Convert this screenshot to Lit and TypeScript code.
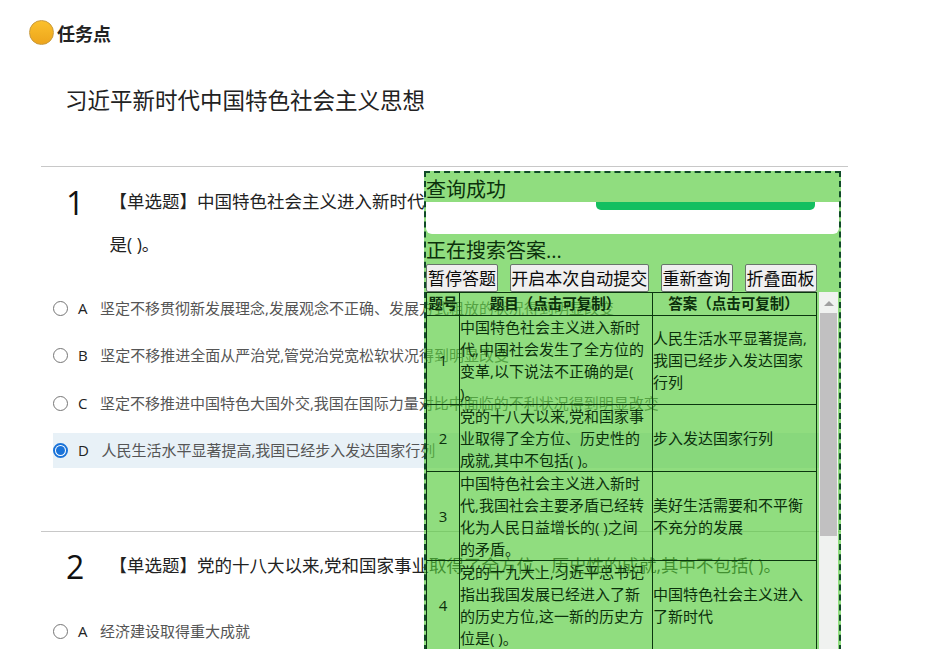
import { LitElement, html, css } from "lit";
import { customElement } from "lit/decorators.js";

interface Option { key: string; text: string; checked?: boolean; }
interface Question { no: number; text: string; options: Option[]; }

const questions: Question[] = [
  {
    no: 1,
    text: "【单选题】中国特色社会主义进入新时代\n是( )。",
    options: [
      { key: "A", text: "坚定不移贯彻新发展理念,发展观念不正确、发展方式粗放的状况得到明显改变" },
      { key: "B", text: "坚定不移推进全面从严治党,管党治党宽松软状况得到明显改变" },
      { key: "C", text: "坚定不移推进中国特色大国外交,我国在国际力量对比中面临的不利状况得到明显改变" },
      { key: "D", text: "人民生活水平显著提高,我国已经步入发达国家行列", checked: true },
    ],
  },
  {
    no: 2,
    text: "【单选题】党的十八大以来,党和国家事业取得了全方位、历史性的成就,其中不包括( )。",
    options: [{ key: "A", text: "经济建设取得重大成就" }],
  },
];

const answers = [
  ["中国特色社会主义进入新时\n代,中国社会发生了全方位的\n变革,以下说法不正确的是(\n)。", "人民生活水平显著提高,\n我国已经步入发达国家\n行列"],
  ["党的十八大以来,党和国家事\n业取得了全方位、历史性的\n成就,其中不包括( )。", "步入发达国家行列"],
  ["中国特色社会主义进入新时\n代,我国社会主要矛盾已经转\n化为人民日益增长的( )之间\n的矛盾。", "美好生活需要和不平衡\n不充分的发展"],
  ["党的十九大上,习近平总书记\n指出我国发展已经进入了新\n的历史方位,这一新的历史方\n位是( )。", "中国特色社会主义进入\n了新时代"],
];

@customElement("quiz-question")
class QuizQuestion extends LitElement {
  static properties = { question: { attribute: false } };
  declare question: Question;
  static styles = css`
    :host { display: block; }
    .head { display: flex; padding: 13px 0 0 25px; line-height: 43px; }
    .no { width: 43.5px; font-size: 32px; line-height: 46px; height: 43px; color: #111; }
    .text { font-size: 17.5px; white-space: pre; color: #222; }
    .options { display: flex; flex-direction: column; gap: 12.5px; padding: var(--options-gap, 24.5px) 0 0 12px; }
    .option { display: flex; align-items: center; height: 35px; font-size: 15px; line-height: 20px; color: #555; white-space: nowrap; }
    .option.on { background: #e8f1f7; }
    .radio { box-sizing: border-box; width: 15px; height: 15px; border: 1px solid #767676; border-radius: 50%; background: #fff; display: grid; place-items: center; }
    .on .radio { border: 2px solid #1a73d9; }
    .on .radio::after { content: ""; width: 9px; height: 9px; border-radius: 50%; background: #1a73d9; }
    .key, .label { padding-bottom: 1px; }
    .on .key, .on .label { padding-bottom: 2px; }
    .key { margin: 0 12.5px 0 10px; color: #222; }
  `;
  render() {
    const q = this.question;
    return html`
      <div class="head"><span class="no">${q.no}</span><span class="text">${q.text}</span></div>
      <div class="options">
        ${q.options.map((o) => html`
          <div class="option ${o.checked ? "on" : ""}">
            <span class="radio"></span><span class="key">${o.key}</span><span class="label">${o.text}</span>
          </div>`)}
      </div>`;
  }
}

@customElement("answer-panel")
class AnswerPanel extends LitElement {
  static styles = css`
    :host { display: block; box-sizing: border-box; border: 2px dashed #104a28; background: rgba(84, 203, 58, 0.65); color: #0b300c; overflow: hidden; }
    .status { font-size: 20px; line-height: 33px; height: 29px; white-space: nowrap; }
    .card { height: 32px; background: #fff; border-radius: 0 0 6px 6px; display: flex; justify-content: flex-end; padding-right: 24px; }
    .bar { width: 219px; height: 8px; background: #13bf60; border-radius: 0 0 5px 5px; }
    .search { line-height: 34px; height: 30px; }
    .buttons { display: flex; gap: 12px; height: 28px; }
    .btn { box-sizing: border-box; height: 28px; border: 1px solid #68756a; border-radius: 2px; background: #efefef; color: #0a0a0a; font: inherit; font-size: 17px; line-height: 27px; padding: 0; width: 72px; text-align: center; white-space: nowrap; }
    .btn.wide { width: 138.5px; }
    .scroll { display: flex; height: 380px; }
    table { border-collapse: collapse; table-layout: fixed; width: 391px; font-size: 15px; line-height: 22px; height: 0; }
    th, td { border: 1px solid #0b350f; padding: 0; white-space: pre; text-align: left; }
    th { text-align: center; font-weight: 700; font-size: 14.5px; }
    .q, .a { padding-right: 2px; }
    .n { width: 32px; text-align: center; }
    .q { width: 190px; }
    .track { width: 19px; margin-left: 2px; background: #f0f2f0; display: flex; flex-direction: column; align-items: center; }
    .arrow { border: 5px solid transparent; border-top: 0; border-bottom-color: #a0a0a0; margin: 9px 0 7px; }
    .thumb { width: 17px; height: 223px; background: #c1c0c1; }
  `;
  render() {
    return html`
      <div class="status">查询成功</div>
      <div class="card"><div class="bar"></div></div>
      <div class="status search">正在搜索答案...</div>
      <div class="buttons">
        <button class="btn">暂停答题</button><button class="btn wide">开启本次自动提交</button>
        <button class="btn">重新查询</button><button class="btn">折叠面板</button>
      </div>
      <div class="scroll">
        <table>
          <tr><th class="n">题号</th><th class="q">题目（点击可复制）</th><th class="a">答案（点击可复制）</th></tr>
          ${answers.map(([q, a], i) => html`<tr><td class="n">${i + 1}</td><td>${q}</td><td>${a}</td></tr>`)}
        </table>
        <div class="track"><span class="arrow"></span><span class="thumb"></span></div>
      </div>`;
  }
}

@customElement("app-root")
class AppRoot extends LitElement {
  static styles = css`
    :host { display: block; position: relative; width: 951px; height: 649px; overflow: hidden; background: #fff; font-family: "Open Sans", "Noto Sans CJK SC", sans-serif; }
    .task { display: flex; align-items: center; gap: 3px; padding: 20px 0 0 29px; height: 25px; font-size: 18px; font-weight: 700; color: #222; }
    .dot { box-sizing: border-box; width: 25px; height: 25px; border-radius: 50%; border: 1px solid #c99a3c; background: linear-gradient(#fbc02c, #eda51c); }
    h1 { margin: 36px 0 0 65px; padding: 0; width: 360px; height: 40px; line-height: 40px; overflow: hidden; font-size: 22.5px; font-weight: 400; color: #222; white-space: nowrap; }
    .rule { margin-left: 41px; height: 1px; width: 807px; background: #c8c8c8; }
    .rule.first { margin-top: 45px; }
    .rule.next { margin-top: 63px; width: 800px; }
    quiz-question { margin-left: 41px; width: 800px; }
    .second { margin-top: -1px; --options-gap: 27px; }
    answer-panel { position: absolute; left: 424px; top: 171px; width: 417px; height: 490px; }
  `;
  render() {
    return html`
      <div class="task"><span class="dot"></span><span>任务点</span></div>
      <h1>习近平新时代中国特色社会主义思想</h1>
      <div class="rule first"></div>
      <quiz-question .question=${questions[0]}></quiz-question>
      <div class="rule next"></div>
      <quiz-question class="second" .question=${questions[1]}></quiz-question>
      <answer-panel></answer-panel>`;
  }
}
